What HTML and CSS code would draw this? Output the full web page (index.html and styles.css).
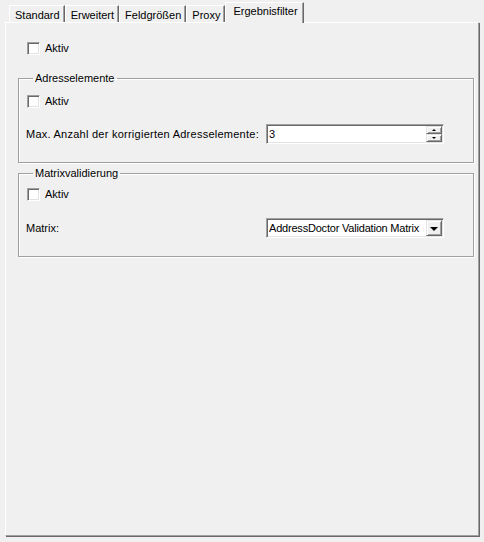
FILE: index.html
```html
<!DOCTYPE html>
<html lang="de">
<head>
    <meta charset="UTF-8">
    <title>Ergebnisfilter</title>
    <link rel="stylesheet" href="styles.css">
</head>
<body>
    <div class="tabs">
        <div class="tab">Standard</div>
        <div class="tab">Erweitert</div>
        <div class="tab">Feldgrößen</div>
        <div class="tab">Proxy</div>
        <div class="tab active">Ergebnisfilter</div>
    </div>
    <div class="panel">
        <label class="check top-check"><span class="box"></span>Aktiv</label>

        <fieldset class="group">
            <legend>Adresselemente</legend>
            <label class="check first"><span class="box"></span>Aktiv</label>
            <div class="field-row">
                <span class="wide-label">Max. Anzahl der korrigierten Adresselemente:</span>
                <div class="spin">
                    <span class="value">3</span>
                    <div class="spin-buttons">
                        <span class="spin-btn"><span class="arrow-up"></span></span>
                        <span class="spin-btn"><span class="arrow-down"></span></span>
                    </div>
                </div>
            </div>
        </fieldset>

        <fieldset class="group second">
            <legend>Matrixvalidierung</legend>
            <label class="check"><span class="box"></span>Aktiv</label>
            <div class="field-row matrix-row">
                <span>Matrix:</span>
                <div class="combo">
                    <span class="value narrow">AddressDoctor Validation Matrix</span>
                    <span class="drop-btn"><span class="arrow-drop"></span></span>
                </div>
            </div>
        </fieldset>
    </div>
</body>
</html>
```

FILE: styles.css
```css
html, body {
    height: 100%;
}

body {
    margin: 0;
    display: flex;
    flex-direction: column;
    background-color: #f0f0f0;
    font-family: "Liberation Sans", Arial, sans-serif;
    font-size: 11px;
    line-height: 13px;
    color: #000;
    overflow: hidden;
}

/* tab strip */
.tabs {
    display: flex;
    align-items: flex-end;
    flex: none;
    height: 20px;
    padding: 2px 0 0 9px;
}

.tab {
    height: 17px;
    padding: 3px 4px 0 5px;
    box-sizing: border-box;
    border-top: 1px solid #fff;
    border-left: 1px solid #fff;
    border-right: 1px solid #696969;
    box-shadow: inset -1px 0 #a0a0a0;
    white-space: nowrap;
}

.tab.active {
    position: relative;
    z-index: 1;
    height: 21px;
    margin-bottom: -1px;
    padding: 2px 5px 0 7px;
    background-color: #f0f0f0;
}

/* page body */
.panel {
    flex: 1;
    width: 474px;
    margin: 0 0 6px 5px;
    box-sizing: border-box;
    padding: 0 4px 0 12px;
    border-top: 1px solid #fff;
    border-left: 1px solid #fff;
    border-right: 1px solid #a0a0a0;
    border-bottom: 1px solid #a0a0a0;
    box-shadow: 1px 1px 0 #696969;
}

.check {
    display: flex;
    align-items: center;
    gap: 5px;
    height: 13px;
    margin-left: 1px;
}

.top-check {
    margin-top: 19px;
    margin-left: 9px;
}

.box {
    width: 13px;
    height: 13px;
    box-sizing: border-box;
    background-color: #fff;
    border: 1px solid;
    border-color: #a0a0a0 #fff #fff #a0a0a0;
    box-shadow: inset 1px 1px #696969, inset -1px -1px #e3e3e3;
}

.group {
    width: 456px;
    margin: 17px 0 0;
    padding: 0 0 18px 7px;
    box-sizing: border-box;
    border: 1px solid #a0a0a0;
    box-shadow: 1px 1px 0 #fff, inset 1px 1px 0 #fff;
    min-inline-size: 0;
}

.group legend {
    margin-left: 7px;
    padding: 0 2px;
}

.group .check.first {
    margin-top: 10px;
}

.group.second {
    margin-top: 4px;
    padding-bottom: 18px;
}

.group.second .check {
    margin-top: 8px;
}

.field-row {
    display: grid;
    grid-template-columns: 240px 178px;
    align-items: center;
    margin-top: 16px;
}

.wide-label {
    letter-spacing: 0.25px;
}

.matrix-row {
    margin-top: 17px;
}

/* spin box and combo */
.spin, .combo {
    display: flex;
    align-items: center;
    height: 20px;
    box-sizing: border-box;
    padding: 1px 1px 1px 2px;
    background-color: #fff;
    border: 1px solid;
    border-color: #a0a0a0 #fff #fff #a0a0a0;
    box-shadow: inset 1px 1px #696969, inset -1px -1px #e3e3e3;
}

.value {
    flex: 1;
    white-space: nowrap;
    overflow: hidden;
}

.value.narrow {
    letter-spacing: -0.2px;
}

.spin-buttons {
    display: flex;
    flex-direction: column;
    width: 16px;
}

.spin-btn, .drop-btn {
    display: flex;
    align-items: center;
    justify-content: center;
    box-sizing: border-box;
    background-color: #f0f0f0;
    border: 1px solid;
    border-color: #e3e3e3 #696969 #696969 #e3e3e3;
    box-shadow: inset 1px 1px #fff, inset -1px -1px #a0a0a0;
}

.spin-btn {
    height: 8px;
}

.drop-btn {
    width: 16px;
    height: 16px;
}

.arrow-up, .arrow-down, .arrow-drop {
    width: 0;
    height: 0;
    border-left: 2px solid transparent;
    border-right: 2px solid transparent;
}

.arrow-up {
    border-bottom: 2px solid #000;
}

.arrow-down {
    border-top: 2px solid #000;
}

.arrow-drop {
    border-left-width: 4px;
    border-right-width: 4px;
    border-top: 4px solid #000;
    margin-top: 1px;
}
```
